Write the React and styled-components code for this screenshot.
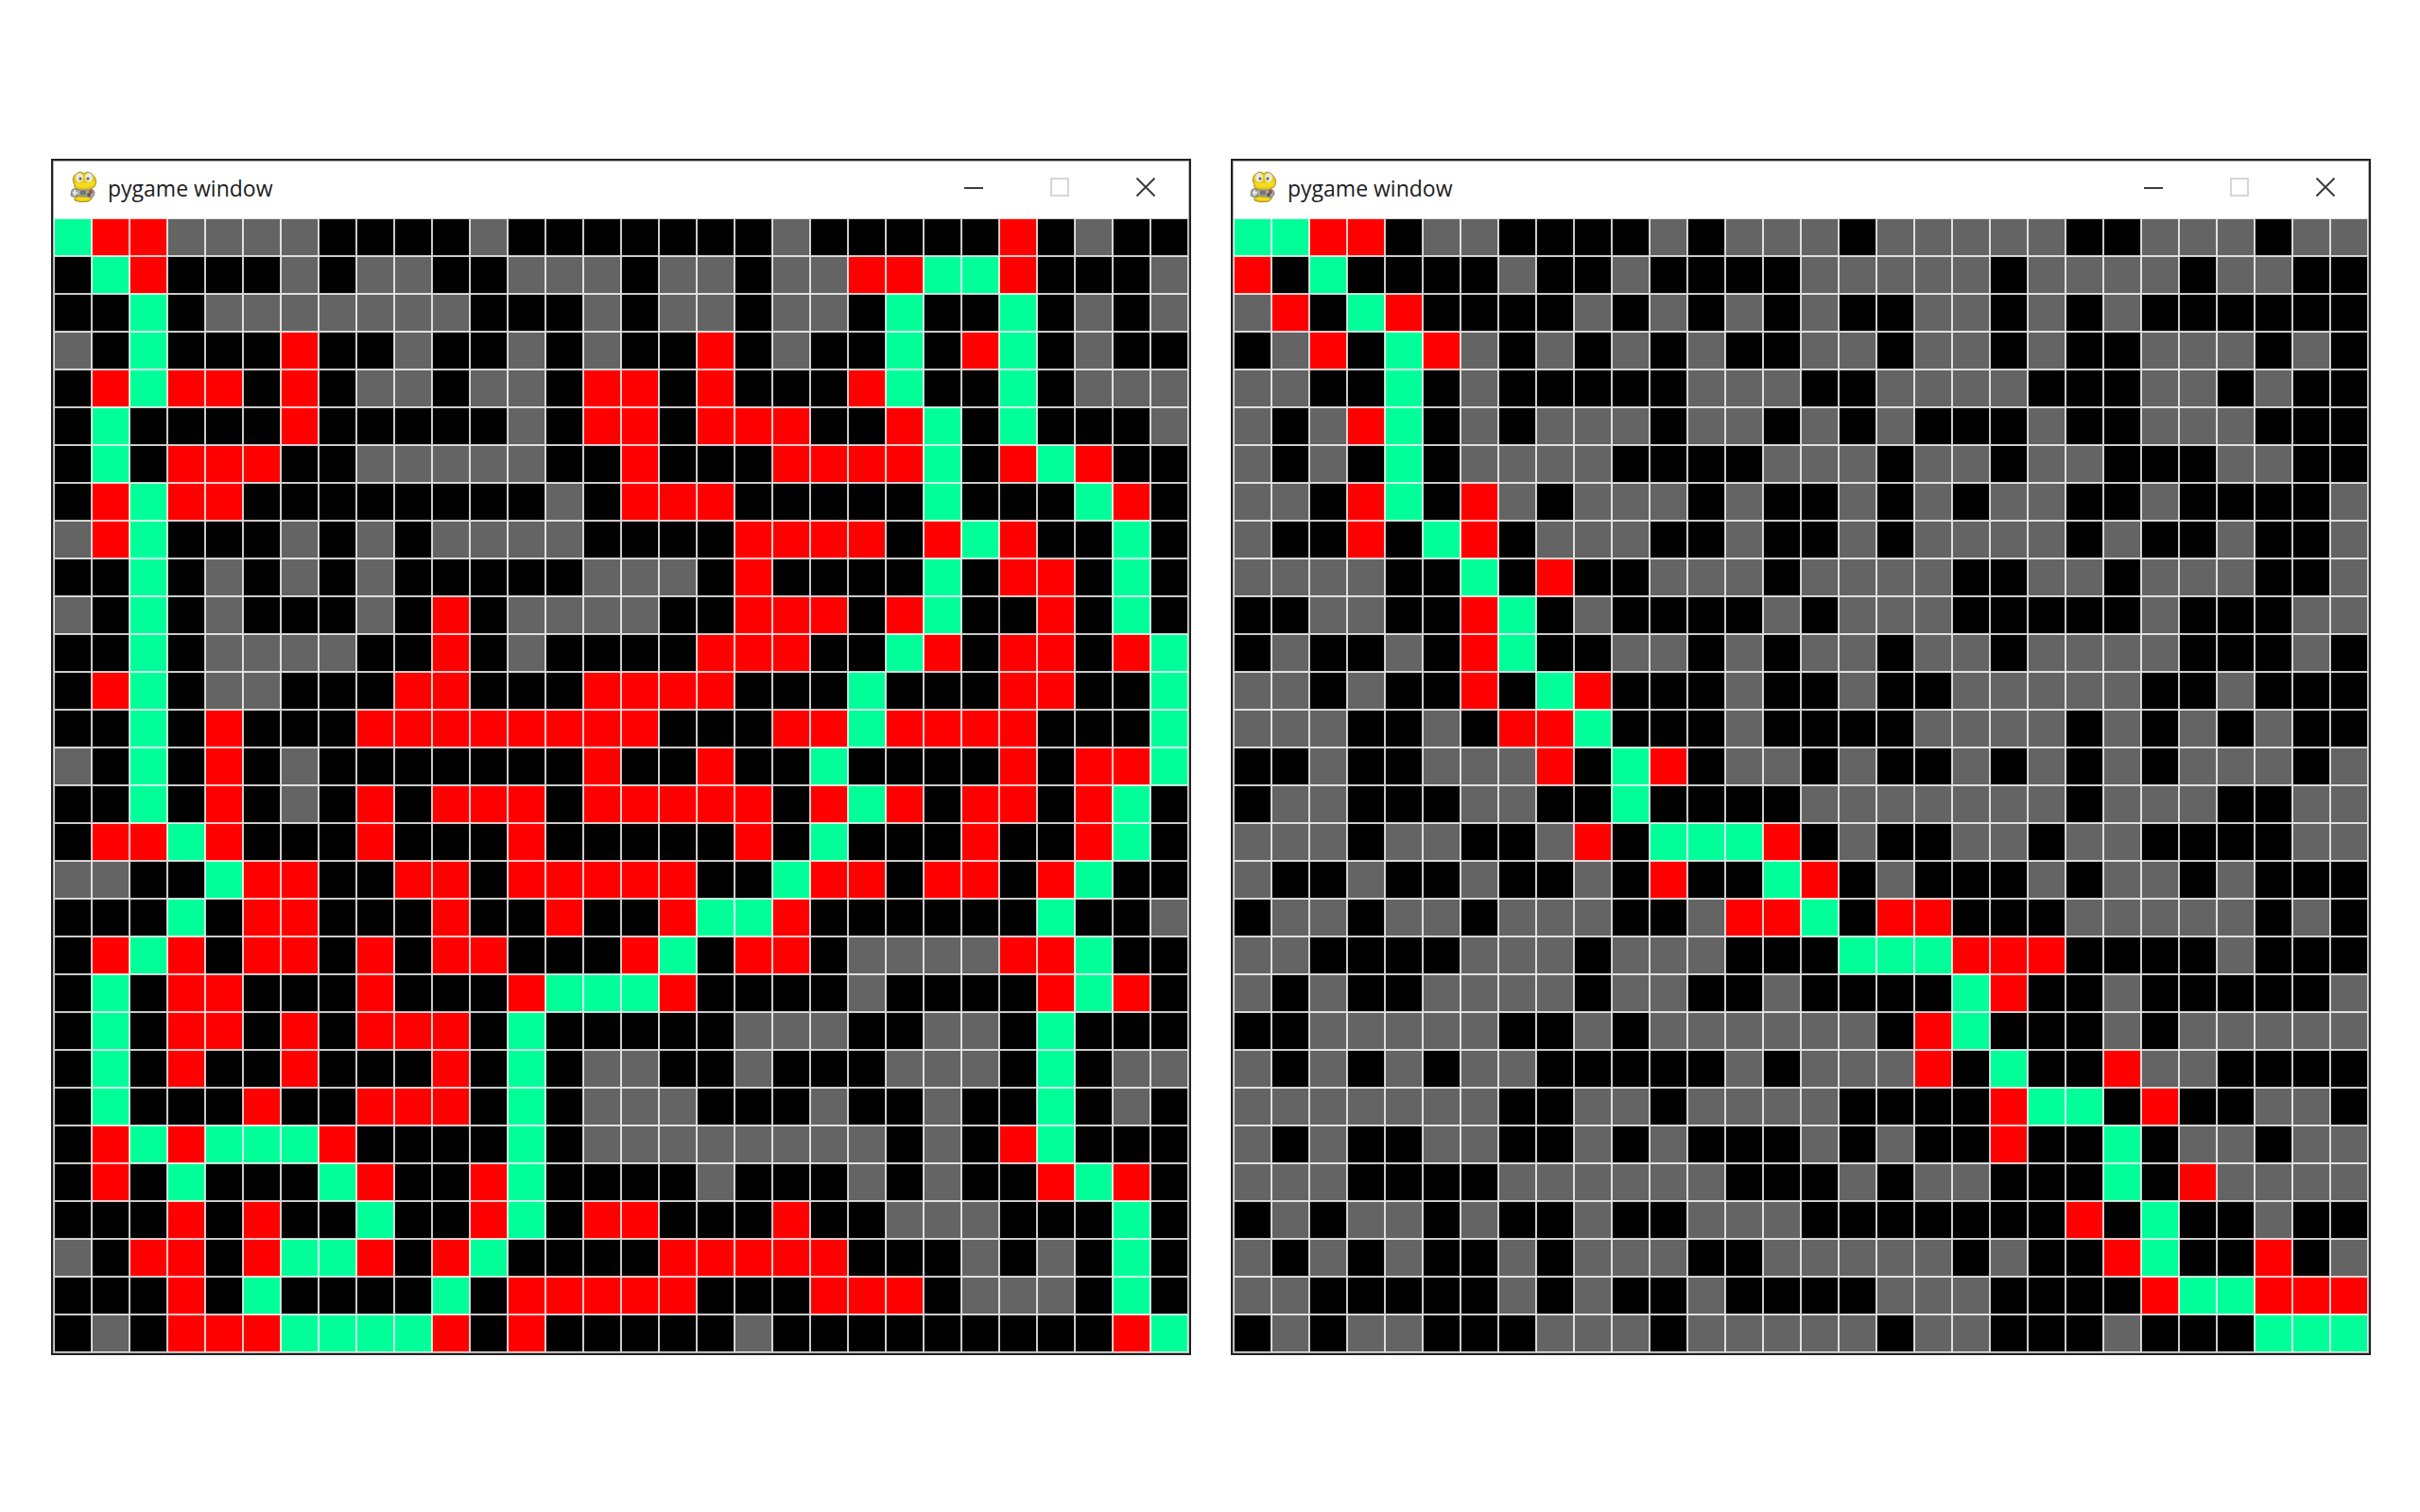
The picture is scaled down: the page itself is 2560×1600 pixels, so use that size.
import React from "react";
import styled, { createGlobalStyle } from "styled-components";

const GlobalStyle = createGlobalStyle`
  *, *::before, *::after { box-sizing: border-box; }
  body {
    margin: 0;
    background: #fff;
    font-family: "Open Sans", "Noto Sans", sans-serif;
  }
`;

const Desktop = styled.main`
  display: flex;
  align-items: flex-start;
  gap: 42px;
  padding: 168px 52px 166px 54px;
`;

const Window = styled.section`
  flex: 1 1 0;
  min-width: 0;
  padding: 1px;
  border: 2px solid #222;
  background: #b4b4b4;
`;

const TitleBar = styled.header`
  display: flex;
  align-items: center;
  height: 60px;
  padding: 0 0 6px 17px;
  background: #fff;
`;

const Title = styled.h1`
  flex: 1;
  margin: 0;
  padding: 2px 0 0 10px;
  font-size: 23px;
  font-weight: 400;
  line-height: 32px;
  color: #1c1c1c;
  white-space: nowrap;
`;

const WindowButton = styled.button`
  display: flex;
  align-items: center;
  justify-content: center;
  width: 91px;
  height: 54px;
  padding: 0;
  border: 0;
  background: transparent;
  color: #3c3c3c;

  &:disabled { color: #d6d6d6; }
`;

const Board = styled.div`
  display: grid;
  grid-template-columns: repeat(30, 1fr);
`;

const cellColors = {
  ".": "#000",
  o: "#646464",
  R: "#f00",
  G: "#00ff99",
};

const Cell = styled.div`
  aspect-ratio: 1;
  background: ${(p) => cellColors[p.$kind]};
  box-shadow: inset 0 0 0 1px rgba(255, 255, 255, 0.8);
`;

const wideSearch = [
  "GRRoooo....o.......o.....R.o..",
  ".GR...o.oo..ooo.oo.ooRRGGR...o",
  "..G.ooooooo...o.oo.oo.G..G.o.o",
  "o.G...R..o..o.o..R.o..G.RG.o..",
  ".RGRR.R.oo.oo.RR.R...RG..G.ooo",
  ".G....R.....o.RR.RRR..RG.G...o",
  ".G.RRR..ooooo..R...RRRRG.RGR..",
  ".RGRR........o.RRR.....G...GR.",
  "oRG...o.o.oooo....RRRR.RGR..G.",
  "..G.o.o.o.....ooo.R....G.RR.G.",
  "o.G.o...o.R.oooo..RRR.RG..R.G.",
  "..G.oooo..R.o....RRR..GR.RR.RG",
  ".RG.oo...RR...RRRR...G...RR..G",
  "..G.R...RRRRRRRR...RRGRRRR...G",
  "o.G.R.o.......R..R..G....R.RRG",
  "..G.R.o.R.RRR.RRRRR.RGR.RR.RG.",
  ".RRGR...R...R.....R.G...R..RG.",
  "oo..GRR..RR.RRRRR..GRR.RR.RG..",
  "...G.RR...R..R..RGGR......G..o",
  ".RGR.RR.R.RR...RG.RR.ooooRRG..",
  ".G.RR...R...RGGGR....o....RGR.",
  ".G.RR.R.RRR.G.....ooo..oo.G...",
  ".G.R..R...R.G.oo..o...ooo.G.oo",
  ".G...R..RRR.G.ooo...o..o..G.o.",
  ".RGRGGGR....G.oooooooo.o.RG...",
  ".R.G...GR..RG....o...o.o..RGR.",
  "...R.R..G..RG.RR...R..ooo...G.",
  "o.RR.RGGR.RG....RRRRR...o.o.G.",
  "...R.G....G.RRRRR...RRR.ooo.G.",
  ".o.RRRGGGGR.R.....o.........RG",
];

const directSearch = [
  "GGRR.oo....o.ooo.ooooo..ooo.oo",
  "R.G....o..o....ooooo.oooo.oo..",
  "oR.GR....o.o.o.o..oo.o.o......",
  ".oR.GRo.o.o.o..oo.oo.o..ooo.o.",
  "oo..G.o.....ooo..oooo...oo.o..",
  "o.oRG.o.ooo.oo.o.o...o..ooo...",
  "o.o.G.oooo....ooo.oo.oo...oo..",
  "oo.RG.Ro.ooo.o..o.o.oo..o....o",
  "o..R.GR.ooo..o..o.oooo.o..o..o",
  "oooo..G.R..ooo.oooo..oo.ooo..o",
  "..oo..RG.o....o.ooo.....o...oo",
  ".o..o.RG..oo.o.oo.oo.oooo...o.",
  "oo.o..R.GR...o..o..ooooo..o...",
  "ooo..o.RRG...o....oooo.o.o.o..",
  "..o..oooR.GR.oo.o..o.o.o.ooo.o",
  ".oo...oo..G....ooooooo.ooo..oo",
  "ooo.oo..oR.GGGR.o..oo.oo....oo",
  "o..o..o..o.R..GR.o...o.oo.o...",
  ".oo.oo.ooo..oRRG.RR...ooooo.o.",
  "oo....ooo.ooo...GGGRRR....o...",
  "o.o..oooo.oo..o....GR..o.....o",
  "..ooooo..o.oooooo.RG...o.ooooo",
  "o.o.o.oo.....o.oooR.G..Roo....",
  "ooooooo..oo.oooo....RGG.R..oo.",
  "o.o..oo..o.o...o.o..R..G.oo.oo",
  "ooo....oooooo...o.oo...G.Roooo",
  ".o.oo.o..o..ooo.......R.G..o..",
  "o.o.o..o.ooo..ooooo.o..RG..R.o",
  "oo.....o.o..o....ooo....RGGRRR",
  ".o.oo...ooo.ooooo.oo...o...GGG",
];

function SnakeIcon() {
  return (
    <svg width="30" height="34" viewBox="0 0 30 34" aria-hidden="true">
      <path
        d="M5 14 C2 11 3 4 7 3 C9 0 13 1 15 3 C17 0 22 1 24 4 C26 6 29 10 27 14 C27 17 24 18 21 19 L22 23 C25 25 24 30 20 32 C15 33 9 33 5 31 C4 28 7 27 9 27 L8 19 C5 18 4 16 5 14 Z"
        fill="#e6c815"
        stroke="#a9901c"
        strokeWidth="1"
      />
      <path d="M5 12 Q15 14 26 11 Q27 15 23 16 Q14 19 7 16 Z" fill="#f5dc22" />
      <ellipse cx="10" cy="7" rx="4" ry="5" fill="#e8e8dc" />
      <ellipse cx="20" cy="7" rx="4" ry="5" fill="#e8e8dc" />
      <circle cx="11" cy="8" r="1.5" fill="#6a6540" />
      <circle cx="19" cy="8" r="1.5" fill="#6a6540" />
      <path
        d="M2 20 Q5 17 9 20 L20 20 Q26 18 26 24 Q24 30 19 27 L9 26 Q4 29 1 26 Z"
        fill="#a8aaa8"
        stroke="#7c7e7c"
        strokeWidth="1"
      />
      <path d="M3 23 H8 M5 20 V26" stroke="#efefef" strokeWidth="1.6" />
      <rect x="11" y="21" width="6" height="4" fill="#6f7374" />
      <circle cx="22" cy="22" r="2" fill="#b5423b" />
      <circle cx="20" cy="25" r="2" fill="#55595c" />
      <path d="M8 29 Q14 31 20 29" fill="none" stroke="#f5dc22" strokeWidth="2" />
    </svg>
  );
}

function PygameWindow({ rows, label }) {
  return (
    <Window aria-label={label}>
      <TitleBar>
        <SnakeIcon />
        <Title>pygame window</Title>
        <WindowButton type="button" aria-label="Minimize">
          <svg width="20" height="20" viewBox="0 0 20 20">
            <path d="M0 11H20" stroke="currentColor" strokeWidth="2" />
          </svg>
        </WindowButton>
        <WindowButton type="button" aria-label="Maximize" disabled>
          <svg width="20" height="20" viewBox="0 0 20 20">
            <rect x="1" y="1" width="18" height="18" fill="none" stroke="currentColor" strokeWidth="2" />
          </svg>
        </WindowButton>
        <WindowButton type="button" aria-label="Close">
          <svg width="20" height="20" viewBox="0 0 20 20">
            <path d="M0.5 0.5L19.5 19.5M19.5 0.5L0.5 19.5" stroke="currentColor" strokeWidth="2" />
          </svg>
        </WindowButton>
      </TitleBar>
      <Board>
        {rows.flatMap((row, y) =>
          [...row].map((kind, x) => <Cell key={`${y}-${x}`} $kind={kind} />)
        )}
      </Board>
    </Window>
  );
}

export default function App() {
  return (
    <>
      <GlobalStyle />
      <Desktop>
        <PygameWindow rows={wideSearch} label="Wide search" />
        <PygameWindow rows={directSearch} label="Direct search" />
      </Desktop>
    </>
  );
}
